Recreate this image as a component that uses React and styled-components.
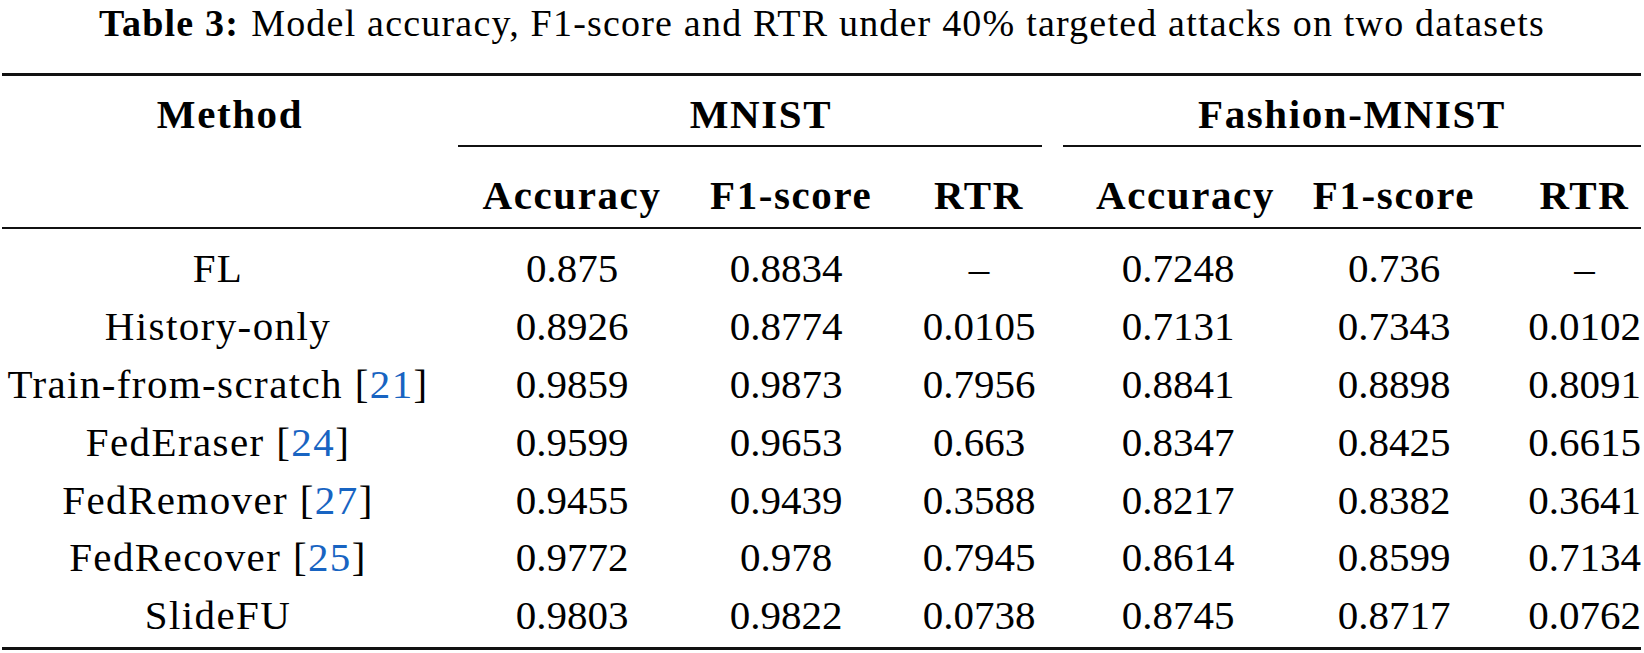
import styled, { createGlobalStyle } from "styled-components";

const SERIF = `"Liberation Serif", "DejaVu Serif", "Times New Roman", Times, serif`

const GlobalStyle = createGlobalStyle`
  html, body {
    margin: 0;
    padding: 0;
    background: #fff;
  }
  body {
    font-family: ${SERIF};
    color: #000;
  }
`

const COLS = "432px 276px 152px 234px 164px 268px 113px"

const Page = styled.div`
  width: 1644px;
  height: 653px;
  overflow: hidden;
  font-family: ${SERIF};
`

const Caption = styled.div`
  font-size: 38px;
  line-height: 40px;
  height: 40px;
  margin-top: 3px;
  margin-bottom: 30px;
  text-align: center;
  white-space: nowrap;
  letter-spacing: 1.2px;

  b {
    font-weight: 700;
    margin-right: 12px;
  }
`

const Table = styled.div`
  margin-left: 2px;
  width: 1639px;
  font-size: 41px;
`

const Rule = styled.div`
  height: ${p => p.$h}px;
  background: #111;
`

const GroupRow = styled.div`
  display: grid;
  grid-template-columns: 456px 584px 21px 578px;
  padding-top: 9px;
  font-weight: 700;
  letter-spacing: 1.6px;
`

const GroupCell = styled.div`
  grid-column: ${p => p.$col};
  text-align: center;
  line-height: 58px;
  height: 58px;
  padding-left: ${p => p.$shift || 0}px;
  padding-bottom: 2px;
  border-bottom: ${p => (p.$line ? "2px solid #111" : "2px solid transparent")};
`

const HeadRow = styled.div`
  display: grid;
  grid-template-columns: ${COLS};
  padding-top: 19px;
  padding-bottom: 3px;
  font-weight: 700;
  letter-spacing: 1.6px;
`

const Body = styled.div`
  padding-top: 10px;
  padding-bottom: 3px;
`

const Row = styled.div`
  display: grid;
  grid-template-columns: ${COLS};
  height: 57.9px;
`

const Cell = styled.div`
  text-align: center;
  line-height: 58px;
  white-space: nowrap;
`

const NameCell = styled(Cell)`
  letter-spacing: 1.4px;
`

const Ref = styled.span`
  color: #1864c2;
`

const rows = [
  { name: "FL", vals: ["0.875", "0.8834", "–", "0.7248", "0.736", "–"] },
  { name: "History-only", vals: ["0.8926", "0.8774", "0.0105", "0.7131", "0.7343", "0.0102"] },
  { name: "Train-from-scratch", ref: "21", vals: ["0.9859", "0.9873", "0.7956", "0.8841", "0.8898", "0.8091"] },
  { name: "FedEraser", ref: "24", vals: ["0.9599", "0.9653", "0.663", "0.8347", "0.8425", "0.6615"] },
  { name: "FedRemover", ref: "27", vals: ["0.9455", "0.9439", "0.3588", "0.8217", "0.8382", "0.3641"] },
  { name: "FedRecover", ref: "25", vals: ["0.9772", "0.978", "0.7945", "0.8614", "0.8599", "0.7134"] },
  { name: "SlideFU", vals: ["0.9803", "0.9822", "0.0738", "0.8745", "0.8717", "0.0762"] },
]

const heads = ["", "Accuracy", "F1-score", "RTR", "Accuracy", "F1-score", "RTR"]

export default function App() {
  return (
    <Page>
      <GlobalStyle />
      <Caption>
        <b>Table 3:</b>Model accuracy, F1-score and RTR under 40% targeted attacks on two datasets
      </Caption>
      <Table>
        <Rule $h={3} />
        <GroupRow>
          <GroupCell $col="1">Method</GroupCell>
          <GroupCell $col="2" $line $shift={22}>MNIST</GroupCell>
          <GroupCell $col="4" $line>Fashion-MNIST</GroupCell>
        </GroupRow>
        <HeadRow>
          {heads.map((h, i) => (
            <Cell key={i}>{h}</Cell>
          ))}
        </HeadRow>
        <Rule $h={2} />
        <Body>
          {rows.map(r => (
            <Row key={r.name}>
              <NameCell>
                {r.name}
                {r.ref ? <> [<Ref>{r.ref}</Ref>]</> : null}
              </NameCell>
              {r.vals.map((v, i) => (
                <Cell key={i}>{v}</Cell>
              ))}
            </Row>
          ))}
        </Body>
        <Rule $h={3} />
      </Table>
    </Page>
  )
}
